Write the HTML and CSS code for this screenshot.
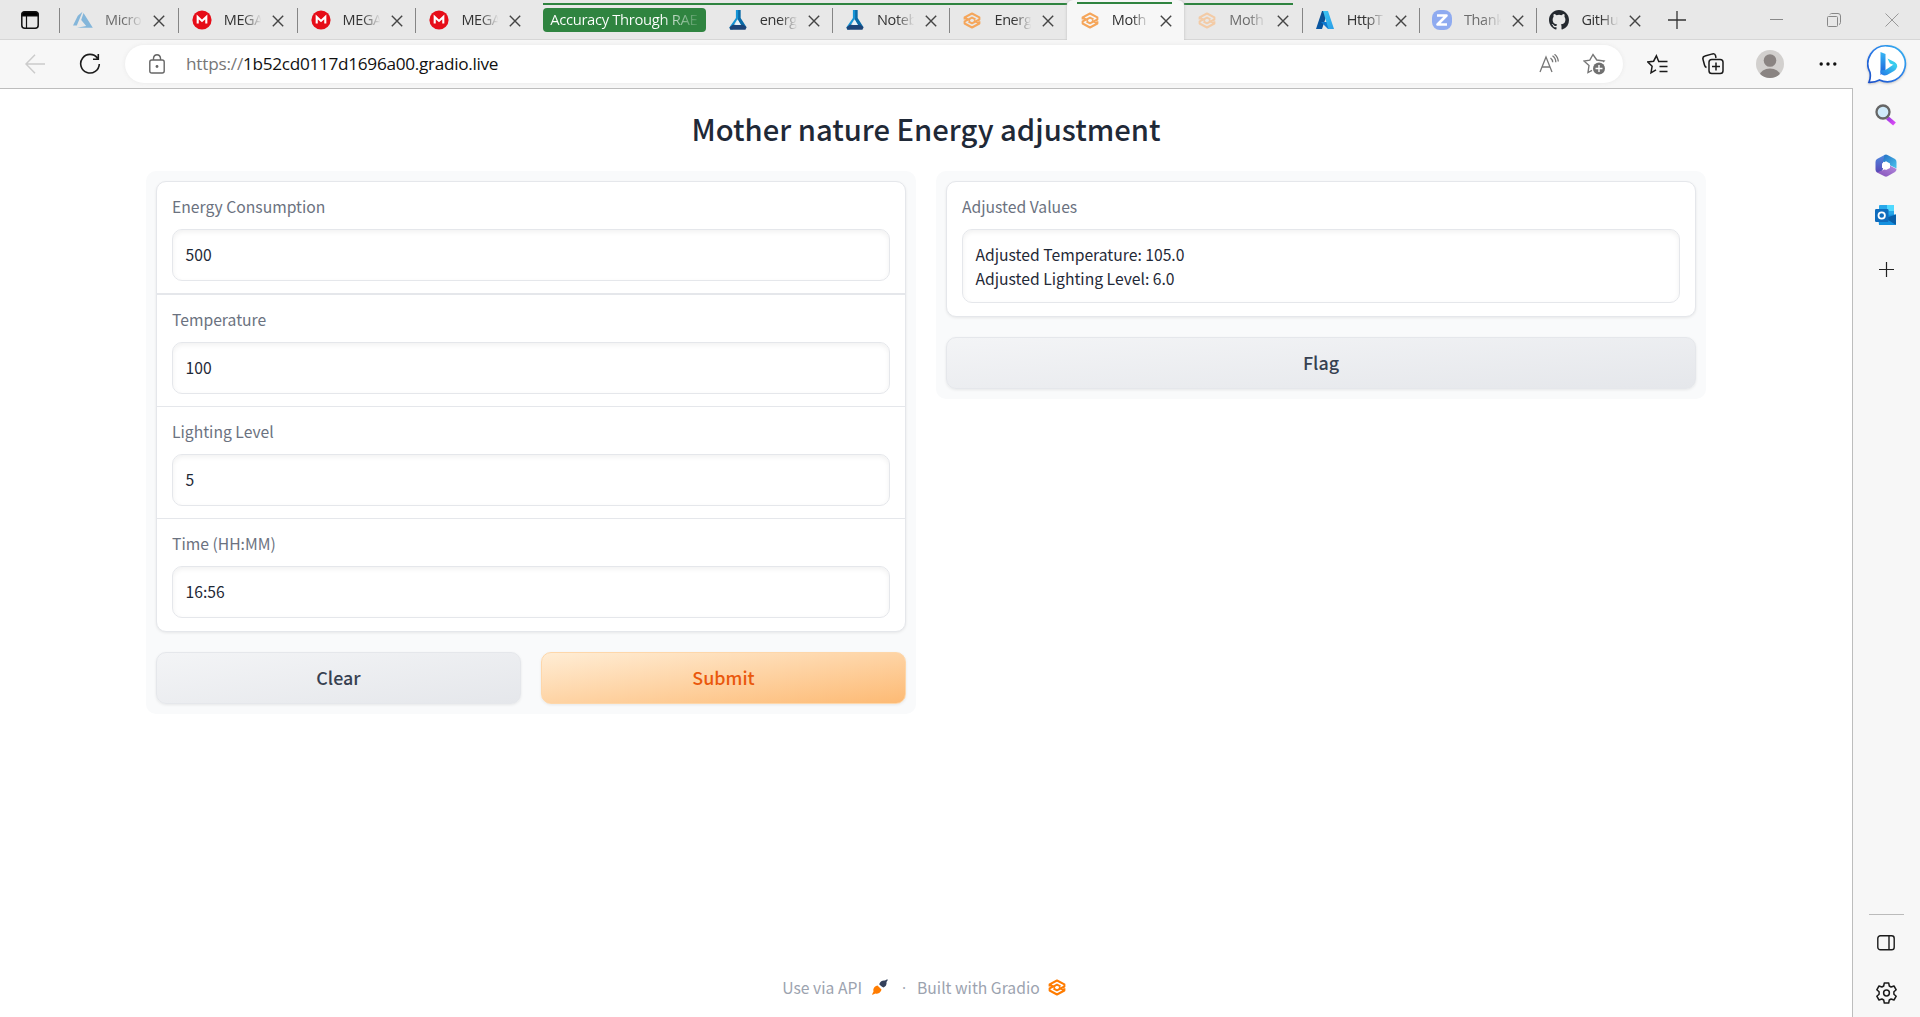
FILE: index.html
```html
<!DOCTYPE html>
<html lang="en">
<head>
<meta charset="utf-8">
<title>Mother nature Energy adjustment</title>
<link rel="stylesheet" href="styles.css">
</head>
<body>
<svg class="defs" width="0" height="0">
  <defs>
    <linearGradient id="bingRing" x1="0" y1="1" x2="1" y2="0"><stop offset="0" stop-color="#1b4fc8"/><stop offset=".5" stop-color="#2a7be8"/><stop offset="1" stop-color="#35b6f0"/></linearGradient>
    <linearGradient id="bingB" x1="0" y1="0" x2="0" y2="1"><stop offset="0" stop-color="#37b8f5"/><stop offset="1" stop-color="#1c5bd8"/></linearGradient>
    <linearGradient id="bingC" x1="0" y1="1" x2="1" y2="0"><stop offset="0" stop-color="#2376e6"/><stop offset="1" stop-color="#3ddcf0"/></linearGradient>
    <linearGradient id="azA" x1="0" y1="1" x2="1" y2="0"><stop offset="0" stop-color="#0a5aa8"/><stop offset="1" stop-color="#0b4a86"/></linearGradient>
    <linearGradient id="azB" x1="0" y1="0" x2="1" y2="1"><stop offset="0" stop-color="#3cc6f4"/><stop offset="1" stop-color="#2a9de6"/></linearGradient>
    <linearGradient id="handle" x1="0" y1="0" x2="1" y2="1"><stop offset="0" stop-color="#9b3be0"/><stop offset="1" stop-color="#dd4bf5"/></linearGradient>
    <linearGradient id="m365a" x1="0" y1="0" x2="1" y2="1"><stop offset="0" stop-color="#2470c4"/><stop offset="1" stop-color="#4cc4ee"/></linearGradient>
    <linearGradient id="m365b" x1="0" y1="0" x2="0" y2="1"><stop offset="0" stop-color="#4e8be0"/><stop offset="1" stop-color="#5a45b5"/></linearGradient>
    <linearGradient id="m365c" x1="0" y1="1" x2="1" y2="0"><stop offset="0" stop-color="#8350b8"/><stop offset="1" stop-color="#b58ade"/></linearGradient>
  </defs>
  <symbol id="close" viewBox="0 0 12 12"><path d="M.8.8l10.4 10.4M11.2.8L.8 11.2" stroke="#444" stroke-width="1.4" fill="none"/></symbol>
  <symbol id="mega" viewBox="0 0 20 20"><circle cx="10" cy="10" r="9.6" fill="#e60d18"/><path d="M5.7 13.4V6.9l4.3 4 4.3-4v6.5" fill="none" stroke="#fff" stroke-width="2.1"/></symbol>
  <symbol id="gradio" viewBox="0 0 18 17"><path d="M1.600 7.500V5.400L9 1.500l7.400 3.900V7.500L9 11.300 5.500 9.500M1.600 5.600l5.500 2.800M16.400 9.300v2.200L9 15.500 1.600 11.500V9.300L9 5.600l3.500 1.800M16.400 11.300l-5.500-2.700" fill="none" stroke="currentColor" stroke-width="2" stroke-linejoin="round"/></symbol>
  <symbol id="lab" viewBox="0 0 18 21"><path d="M9 0h2.800v8.300L18 18.200l-5.500-1L8.500 10z" fill="#0a6ba8"/><path d="M6.800 0H9.200v8.500L4.800 15.500 3.500 20.500H.8L0 18l6.800-9.500z" fill="#1594d6"/><path d="M1 20.800L0 18.500 3.500 15.500h11L18 18l-1.200 2.800z" fill="#1d4478"/><path d="M9 10.500l3.200 5.300H5.800z" fill="#e8f3fa"/></symbol>
</svg>

<header class="browser">
  <div class="tabstrip">
    <div class="workspace"><svg width="18" height="18" viewBox="0 0 18 18"><rect x=".8" y=".8" width="16.400" height="16.400" rx="3" fill="none" stroke="#111" stroke-width="1.500"/><path d="M1 5V3.500Q1 1 3.500 1h11Q17 1 17 3.500V5zM5.500 5v12" stroke="#111" stroke-width="1.200"/></svg></div>

    <div class="tab early"><svg class="ico" viewBox="0 0 20 18"><path d="M9.500.8L4.800 4.800 0 14.500h3.800zM10.500 2l9.300 14.800H4l9.200-1.900-5-5.900z" fill="#84b6da"/></svg><span class="name dim">Micro</span><svg class="x"><use href="#close"/></svg></div>
    <div class="tab early"><svg class="ico"><use href="#mega"/></svg><span class="name">MEGA</span><svg class="x"><use href="#close"/></svg></div>
    <div class="tab early"><svg class="ico"><use href="#mega"/></svg><span class="name">MEGA</span><svg class="x"><use href="#close"/></svg></div>
    <div class="tab early"><svg class="ico"><use href="#mega"/></svg><span class="name">MEGA</span><svg class="x"><use href="#close"/></svg></div>

    <div class="group"><span class="chip"><span>Accuracy Through RAE</span></span></div>
    <div class="tab grouped nosep"><svg class="ico"><use href="#lab"/></svg><span class="name">energ</span><svg class="x"><use href="#close"/></svg></div>
    <div class="tab grouped"><svg class="ico"><use href="#lab"/></svg><span class="name">Noteb</span><svg class="x"><use href="#close"/></svg></div>
    <div class="tab grouped before"><svg class="ico small"><use href="#gradio"/></svg><span class="name">Energ</span><svg class="x"><use href="#close"/></svg></div>
    <div class="tab active"><svg class="ico small"><use href="#gradio"/></svg><span class="name">Moth</span><svg class="x"><use href="#close"/></svg></div>
    <div class="tab grouped after nosep"><svg class="ico small faint"><use href="#gradio"/></svg><span class="name dim">Moth</span><svg class="x"><use href="#close"/></svg></div>
    <div class="tab"><svg class="ico" viewBox="0 0 20 20"><path d="M7 1h6L7 19H1z" fill="url(#azA)"/><path d="M6 12h8l3 7h-4z" fill="#0f79cf"/><path d="M8 1h5l6 18h-5.500z" fill="url(#azB)"/></svg><span class="name">HttpT</span><svg class="x"><use href="#close"/></svg></div>
    <div class="tab"><svg class="ico" viewBox="0 0 20 20"><rect width="20" height="20" rx="8" fill="#8fabf0"/><path d="M5 5.500h9.500L5.500 14.500H15" stroke="#fff" stroke-width="2.600" fill="none" stroke-linejoin="round"/></svg><span class="name dim">Thank</span><svg class="x"><use href="#close"/></svg></div>
    <div class="tab"><svg class="ico" viewBox="0 0 16 16"><path fill="#24292f" d="M8 0C3.580 0 0 3.580 0 8c0 3.540 2.290 6.530 5.470 7.590.4.070.55-.17.55-.38 0-.19-.01-.82-.01-1.490-2.010.37-2.530-.49-2.690-.94-.09-.23-.48-.94-.82-1.130-.28-.15-.68-.52-.01-.53.63-.01 1.080.58 1.230.82.72 1.210 1.870.87 2.330.66.070-.52.280-.87.510-1.070-1.780-.2-3.640-.89-3.640-3.950 0-.87.310-1.590.82-2.150-.08-.2-.36-1.020.080-2.120 0 0 .67-.21 2.200.82a7.500 7.500 0 0 1 4 0c1.530-1.040 2.200-.82 2.200-.82.44 1.100.16 1.920.080 2.120.51.56.82 1.270.82 2.150 0 3.070-1.870 3.750-3.650 3.950.29.25.54.73.54 1.480 0 1.070-.01 1.930-.01 2.200 0 .21.150.46.55.38A8 8 0 0 0 16 8c0-4.420-3.580-8-8-8z"/></svg><span class="name">GitHu</span><svg class="x"><use href="#close"/></svg></div>
    <div class="newtab"><svg width="18" height="18"><path d="M9 0v18M0 9h18" stroke="#333" stroke-width="1.300"/></svg></div>
    <div class="winctl">
      <svg width="13" height="14"><path d="M0 6.500h13" stroke="#888"/></svg>
      <svg width="14" height="14"><path d="M.5 4.500q0-1 1-1h8q1 0 1 1v8q0 1-1 1h-8q-1 0-1-1zM3 1.500Q3.500.5 4.500.5H11q2.500 0 2.500 2.500v6.500q0 1.500-1.500 2" fill="none" stroke="#888"/></svg>
      <svg width="14" height="14"><path d="M.5.5l13 13M13.500.5l-13 13" stroke="#999"/></svg>
    </div>
  </div>

  <div class="toolbar">
    <svg class="back" width="20" height="20"><path d="M20 10H1M10 .8L1 10l9 9.200" fill="none" stroke="#ccc" stroke-width="1.500"/></svg>
    <svg class="reload" width="22" height="22"><path d="M18.500 5.200A9.300 9.300 0 1 0 20.300 11M19.300 1v5.300H14" fill="none" stroke="#1b1b1b" stroke-width="1.600"/></svg>
    <div class="address">
      <svg class="lock" width="16" height="20"><path d="M2.800 6h10.400q2 0 2 2v9q0 2-2 2H2.800q-2 0-2-2V8q0-2 2-2zM4.500 6V4q.4-3.200 3.500-3.200T11.500 4v2" fill="none" stroke="#666" stroke-width="1.400"/><circle cx="8" cy="12.500" r="1.400" fill="#666"/></svg>
      <span class="url"><span class="scheme">https://</span>1b52cd0117d1696a00.gradio.live</span>
      <svg class="aloud" width="20" height="20"><path d="M1 18L7 3l6 15M3.300 13h7.500M11.500 4q2.200 1.600 2.200 4.300M13.500 1.800Q16.800 4 16.800 8.300M15.500.3Q19 3 19.300 7.500" fill="none" stroke="#777" stroke-width="1.300"/></svg>
      <svg class="addfav" width="23" height="22"><path d="M20 9l1-1-7.200-1L10 1.500 6.800 7.100 1 8l5 4.500L5 19.500l4-2.200" fill="none" stroke="#777" stroke-width="1.400"/><circle cx="16" cy="15.500" r="6" fill="#707070"/><path d="M16 12v7M12.500 15.500h7" stroke="#fff" stroke-width="1.400"/></svg>
    </div>
    <svg class="favs" width="21" height="21"><path d="M11.500 7L9.400 1.800 6.600 7.200.8 8l4.300 4.300L4 18.800l5-2.900M11 7.500h9.500M12.500 12.500h8M12.500 17.500h8" fill="none" stroke="#1b1b1b" stroke-width="1.500"/></svg>
    <svg class="coll" width="22" height="22"><path d="M4.500 14.500Q3 14 2.500 12L.9 6Q.5 3.500 3 2.900l7.500-2Q13 .4 13.600 2.800L14 5" fill="none" stroke="#1b1b1b" stroke-width="1.500"/><rect x="7" y="6.500" width="14" height="14" rx="2.800" fill="none" stroke="#1b1b1b" stroke-width="1.500"/><path d="M14 9.500v8M10 13.500h8" stroke="#1b1b1b" stroke-width="1.500"/></svg>
    <svg class="avatar" width="28" height="28" viewBox="0 0 28 28"><clipPath id="av"><circle cx="14" cy="14" r="14"/></clipPath><circle cx="14" cy="14" r="14" fill="#d2d0ce"/><g clip-path="url(#av)" fill="#8a8482"><circle cx="14" cy="10.500" r="6.300"/><ellipse cx="14" cy="25" rx="10" ry="6.500"/></g></svg>
    <svg class="more" width="18" height="4"><g fill="#111"><circle cx="2.200" cy="2" r="1.700"/><circle cx="9" cy="2" r="1.700"/><circle cx="15.800" cy="2" r="1.700"/></g></svg>
  </div>
</header>

<div class="below">
  <main class="page">
    <h1>Mother nature Energy adjustment</h1>
    <div class="columns">
      <section class="panel">
        <div class="form">
          <div class="field"><label>Energy Consumption</label><div class="box">500</div></div>
          <div class="field"><label>Temperature</label><div class="box">100</div></div>
          <div class="field"><label>Lighting Level</label><div class="box">5</div></div>
          <div class="field"><label>Time (HH:MM)</label><div class="box">16:56</div></div>
        </div>
        <div class="actions"><button>Clear</button><button class="primary">Submit</button></div>
      </section>
      <section class="panel">
        <div class="form">
          <div class="field output"><label>Adjusted Values</label><div class="box">Adjusted Temperature: 105.0<br>Adjusted Lighting Level: 6.0</div></div>
        </div>
        <div class="actions"><button>Flag</button></div>
      </section>
    </div>
    <footer>
      <span>Use via API</span>
      <svg class="rocket" width="16" height="16" viewBox="0 0 16 16"><path d="M0 15.500l1.500-3Q.5 9 4 7l1.500-.5 4 4L9 12q-2 3.500-5.500 2.500L.5 15.800z" fill="#ff7c00"/><path d="M7.500 4.500Q9 1 13 1.500L15.200.2l.6.7L14.500 3q.5 4-3 5.500L10 7.800 7.300 5.500z" fill="#33405a"/></svg>
      <span class="dot">·</span>
      <span>Built with Gradio</span>
      <svg class="glogo" width="18" height="17"><use href="#gradio"/></svg>
    </footer>
  </main>
  <aside class="sidebar">
    <svg class="bing" width="40" height="40" viewBox="0 0 40 40"><path d="M20 1.800A18 18 0 1 1 12.500 36Q8 38.500 2 38.300q2-5 1-10A18 18 0 0 1 20 1.800z" fill="#fff" stroke="url(#bingRing)" stroke-width="1.700"/><path d="M13.500 8l5 2v17.500L13.500 31z" fill="url(#bingB)"/><path d="M13.500 26.500v2q2 4 6.500 2.500l7-4q3-2 3-5.500l-2-2-9.500 6.500z" fill="url(#bingC)"/><path d="M20.500 14.500l7 3.500q3.500 2 2.500 6-1-2.500-3-3l-4-1.500z" fill="#38cdee"/></svg>
    <svg class="s-search" width="22" height="22"><path d="M12.500 14l7 6" stroke="url(#handle)" stroke-width="4.200"/><circle cx="8" cy="8" r="6.500" fill="#cfeafa" stroke="#666" stroke-width="2.300"/></svg>
    <svg class="s-365" width="22" height="23" viewBox="0 0 22 23"><path d="M10 .8L2 5Q.5 6 .5 8v7.500q0 2 1.500 3l3.500.5L8 15V8l5-4z" fill="url(#m365b)"/><path d="M9.500 1q1.500-.8 3 0L20 5q1.500 1 1.500 3v6.500L14.500 11 8 7.500z" fill="url(#m365a)"/><path d="M2 18.500l7.500 3.800q1.500.7 3 0L20 18q1.500-1 1.500-3l-7-3.500-5 4z" fill="url(#m365c)"/><path d="M11 7.200l4 2.200v4.500L11 16l-4-2.200V9.400z" fill="#fff"/></svg>
    <svg class="s-outlook" width="22" height="20"><path d="M5 0h13q1 0 1 1v10H4V1q0-1 1-1z" fill="#28a8ea"/><path d="M12 0h7v6h-7z" fill="#50d9ff"/><path d="M3 10l18-.5V19q0 1-1 1H4z" fill="#1490df"/><path d="M21 9.500V20L10 13z" fill="#0a5fa8"/><rect y="4" width="13.500" height="13" rx="1.200" fill="#0f6cbd"/><circle cx="6.700" cy="10.500" r="3.200" fill="none" stroke="#fff" stroke-width="1.800"/></svg>
    <svg class="s-plus" width="15" height="15"><path d="M7.500 0v15M0 7.500h15" stroke="#222" stroke-width="1.200"/></svg>
    <div class="rule"></div>
    <svg class="s-panel" width="18" height="16"><rect x=".8" y=".8" width="16.400" height="14" rx="2.600" fill="none" stroke="#1b1b1b" stroke-width="1.400"/><path d="M12 1v14" stroke="#1b1b1b" stroke-width="1.400"/></svg>
    <svg class="s-gear" width="21" height="22" viewBox="-10.500 -11 21 22"><path d="M-2.200-10h4.400l.6 3 1.800 1 2.900-1 2.200 3.800-2.300 2v2.400l2.300 2L7.500 7l-2.900-1-1.800 1-.6 3h-4.400l-.6-3-1.800-1-2.900 1-2.200-3.800 2.300-2v-2.400l-2.300-2L-7.500-7l2.900 1 1.800-1z" fill="none" stroke="#1b1b1b" stroke-width="1.500" stroke-linejoin="round"/><circle r="2.900" fill="none" stroke="#1b1b1b" stroke-width="1.500"/></svg>
  </aside>
</div>
</body>
</html>
```

FILE: styles.css
```css
* { box-sizing: border-box; }
body {
  margin: 0;
  height: 1017px;
  overflow: hidden;
  display: flex;
  flex-direction: column;
  background: #f7f7f7;
  font-family: "Noto Sans CJK SC", "Noto Sans", sans-serif;
}
svg { display: block; flex: none; }
.defs { position: absolute; }

/* Browser frame */
.browser { font-family: "Open Sans", "Noto Sans", sans-serif; flex: none; }
.tabstrip {
  display: flex;
  height: 40px;
  background: #e8e8e8;
  box-shadow: inset 0 -1px 0 #d6d6d6;
}
.workspace { width: 59px; padding: 11px 0 0 21px; }
.tab {
  width: 117.400px;
  flex: none;
  display: flex;
  align-items: center;
  padding-left: 13px;
  background: linear-gradient(#858585, #858585) 0 8px / 1px 25px no-repeat;
}
.early { width: 118.800px; padding-left: 14px; }
.nosep { background: none; }
.ico { width: 20px; height: 20px; }
.ico.small { width: 18px; height: 17px; margin: 0 1px; color: #f5a65b; }
.ico.faint { color: #f3cba6; }
.name {
  width: 39px;
  margin-left: 12px;
  white-space: nowrap;
  font-size: 14.500px;
  letter-spacing: -0.400px;
  line-height: 22px;
  color: #333;
  -webkit-mask-image: linear-gradient(90deg, #000 50%, transparent 96%);
  mask-image: linear-gradient(90deg, #000 50%, transparent 96%);
}
.name.dim { color: #6d6d6d; }
.x { width: 12px; height: 12px; margin: 2px 0 0 9px; }
.group {
  width: 180.500px;
  padding: 3px 0 0 9px;
  background: linear-gradient(#2f8440, #2f8440) 9px 3px / 172px 2px no-repeat;
}
.chip {
  display: block;
  width: 163px;
  height: 29px;
  padding-top: 5px;
}
.chip span {
  display: block;
  height: 24px;
  padding-left: 7px;
  white-space: nowrap;
  border-radius: 4px;
  background: #2f8440;
  color: transparent;
  background-image: linear-gradient(90deg, #fff 118px, #2f8440 160px), linear-gradient(#2f8440, #2f8440);
  -webkit-background-clip: text, border-box;
  background-clip: text, border-box;
  font-size: 14.800px;
  letter-spacing: -0.350px;
  line-height: 23px;
}
.grouped { box-shadow: inset 0 3px 0 #e8e8e8, inset 0 5px 0 #2f8440; }
.before { border-bottom-right-radius: 6px; }
.after {
  border-bottom-left-radius: 6px;
  box-shadow: none;
  background: linear-gradient(#2f8440, #2f8440) 0 3px / 109px 2px no-repeat;
}
.active {
  border-radius: 6px 6px 0 0;
  background: linear-gradient(#2f8440, #2f8440) 10px 2px / 95px 2px no-repeat, #f7f7f7;
  box-shadow: 0 0 3px #bbb;
  clip-path: inset(0 -4px);
}
.newtab { width: 112px; padding: 11px 0 0 14px; }
.winctl { display: flex; align-items: flex-start; gap: 44px; padding-top: 13px; margin-left: 4px; }

.toolbar {
  height: 48px;
  display: flex;
  align-items: center;
  padding-left: 25px;
}
.reload { margin-left: 34px; }
.address {
  width: 1498px;
  height: 38px;
  margin-left: 24px;
  padding-left: 24px;
  display: flex;
  align-items: center;
  border-radius: 19px;
  background: #fff;
  box-shadow: 0 0 4px #e8e8e8;
}
.url {
  margin-left: 21px;
  width: 1353px;
  font-size: 17.200px;
  letter-spacing: -0.300px;
  color: #111;
  line-height: 24px;
}
.scheme { color: #777; letter-spacing: -0.200px; }
.addfav { margin-left: 24px; }
.favs { margin-left: 24px; }
.coll { margin-left: 34px; }
.avatar { margin-left: 32px; }
.more { margin-left: 35px; }

/* Page and side rail */
.below { flex: 1; min-height: 0; display: flex; }
.page {
  width: 1853px;
  flex: none;
  border: solid #bdbdbd;
  border-width: 1px 1px 0 0;
  background: #fff;
  display: flex;
  flex-direction: column;
  padding: 0 146px;
}
h1 {
  margin: 19px 0 23px;
  text-align: center;
  font-size: 29.200px;
  font-weight: 500;
  line-height: 40px;
  color: #1f2937;
}
.columns { display: grid; grid-template-columns: 770px 770px; gap: 20px; align-items: start; }
.panel {
  padding: 10px;
  border-radius: 10px;
  background: #f9fafb;
  display: flex;
  flex-direction: column;
  gap: 20px;
}
.form {
  border: 1px solid #e5e7eb;
  border-radius: 10px;
  background: #fff;
  box-shadow: 0 1px 3px rgba(0, 0, 0, .08);
}
.field { padding: 11.500px 15px; height: 112px; border-top: 1px solid #e5e7eb; }
.field:first-child { height: 111px; border-top: 0; }
.field:nth-child(2) { height: 113px; border-top-width: 2px; }
.field:nth-child(4) { height: 113px; padding-top: 12px; }
.field.output { height: 134px; }
label {
  display: block;
  margin-bottom: 9px;
  font-size: 15.700px;
  line-height: 26px;
  color: #6b7280;
}
.box {
  height: 52px;
  padding: 13px 12.500px;
  border: 1px solid #e5e7eb;
  border-radius: 10px;
  box-shadow: inset 0 2px 5px rgba(0, 0, 0, .06);
  font-size: 15.700px;
  line-height: 24px;
  color: #1f2937;
}
.output .box { height: 74px; }
.actions { display: flex; gap: 20px; }
.actions button {
  flex: 1;
  height: 52px;
  padding: 0 0 3px;
  border: 1px solid #e5e7eb;
  border-radius: 10px;
  background: linear-gradient(to bottom right, #f3f4f6, #e5e7eb);
  box-shadow: 0 1px 3px rgba(0, 0, 0, .08);
  font: 500 17.900px/26px "Noto Sans CJK SC", sans-serif;
  color: #374151;
}
.actions .primary {
  border-color: #fed7aa;
  background: linear-gradient(to bottom right, #ffedd5, #fdba74);
  color: #ea580c;
}
footer {
  margin-top: auto;
  height: 42px;
  padding-right: 4px;
  display: flex;
  justify-content: center;
  align-items: flex-start;
  line-height: 26px;
  font-size: 15.700px;
  color: #9ca3af;
}
.rocket { margin: 4px 0 0 10px; }
.dot { width: 5px; margin: 0 10px 0 14px; font-family: "Open Sans", sans-serif; }
.glogo { margin: 4px 0 0 8px; color: #ff7c00; }

.sidebar {
  flex: 1;
  margin-top: -44px;
  padding-right: 1px;
  display: flex;
  flex-direction: column;
  align-items: center;
}
.bing { margin-left: 2px; filter: drop-shadow(0 1px 1px rgba(0, 0, 0, .2)); }
.s-search { margin-top: 20px; }
.s-365 { margin-top: 28px; }
.s-outlook { margin-top: 28px; }
.s-plus { margin-top: 37px; }
.rule { width: 35px; height: 1px; margin-top: auto; background: #bbb; }
.s-panel { margin-top: 20px; }
.s-gear { margin: 31px 0 13px; }
```
